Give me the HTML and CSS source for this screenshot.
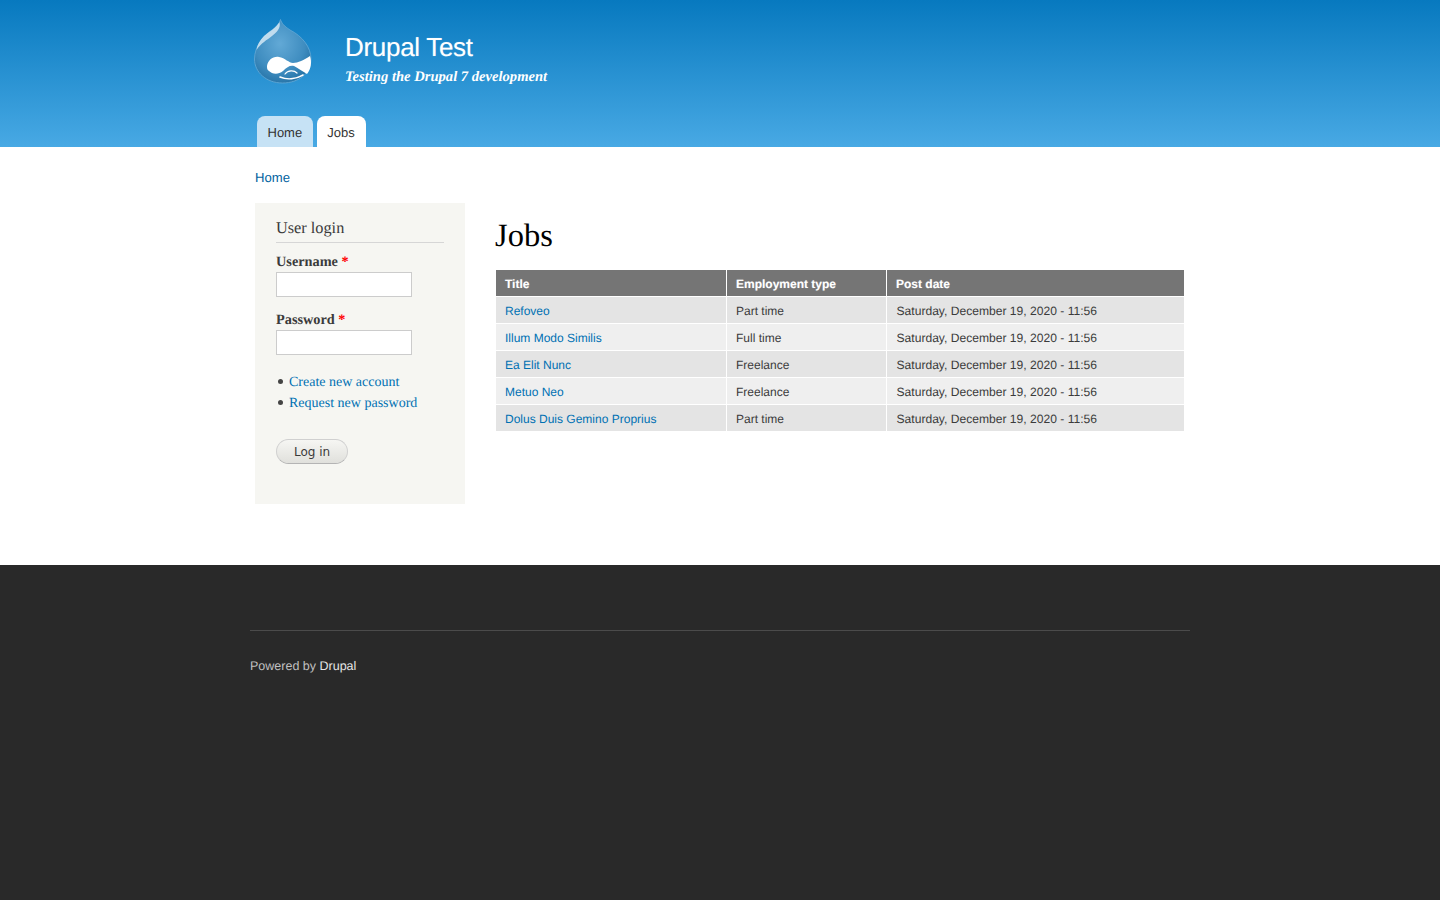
FILE: index.html
```html
<!DOCTYPE html>
<html lang="en">
<head>
<meta charset="utf-8">
<title>Jobs | Drupal Test</title>
<link rel="stylesheet" href="styles.css">
</head>
<body>
<header class="header">
  <div class="section header-inner">
    <div class="branding">
      <svg class="logo" width="60" height="66" viewBox="0 0 60 66" aria-label="Drupal logo">
        <defs>
          <radialGradient id="drop" cx="0.45" cy="0.38" r="0.72">
            <stop offset="0" stop-color="#62a9d6"/>
            <stop offset="0.6" stop-color="#3f8dc0"/>
            <stop offset="1" stop-color="#1d6a9e"/>
          </radialGradient>
        </defs>
        <path d="M26.500 0.500 C27.500 4 30 7 36 11 C48 17 57 28 57 40 C57 54 45 64 28.500 64 C12 64 0.500 53 0.500 40 C0.500 27 10 16 18 11 C22 8 25.500 5 26.500 0.500 Z" fill="url(#drop)" stroke="#5fa6d4" stroke-width="0.9"/>
        <path d="M25.500 3 C22 9 16 12 10 17 C6 21 3 26 2.500 31 C7 24 13 21 18 17 C23 13 27 9 25.500 3 Z" fill="#d4e8f4" opacity="0.85"/>
        <path d="M13 47 C14 41 19 37 25 38 C31 39 35 44 39 44 C44 44 50 41 56 37 C58 43 57 50 53 55 C48 52 44 49 40 47 C36 46 33 48 29 52 C24 56 18 55 15 52 C13 51 13 49 13 47 Z" fill="#fff"/>
        <path d="M26 58 C33 61 42 60 49 56" fill="none" stroke="#fff" stroke-width="1.600" stroke-linecap="round"/>
        <path d="M31 55 C34 51 40 51 43 54" fill="none" stroke="#fff" stroke-width="1.200" stroke-linecap="round"/>
      </svg>
      <div class="site-text">
        <div class="site-name">Drupal Test</div>
        <div class="site-slogan">Testing the Drupal 7 development</div>
      </div>
    </div>
    <nav class="tabs">
      <a class="tab tab-home" href="#">Home</a>
      <a class="tab tab-active" href="#">Jobs</a>
    </nav>
  </div>
</header>

<div class="section main">
  <div class="breadcrumb"><a href="#">Home</a></div>
  <div class="columns">
    <aside class="sidebar">
      <h2 class="block-title">User login</h2>
      <form class="login">
        <label class="field-label" for="u">Username <span class="req">*</span></label>
        <input class="text-input" id="u" type="text">
        <label class="field-label field-pass" for="p">Password <span class="req">*</span></label>
        <input class="text-input" id="p" type="password">
        <ul class="links">
          <li><a href="#">Create new account</a></li>
          <li><a href="#">Request new password</a></li>
        </ul>
        <button class="btn" type="button">Log in</button>
      </form>
    </aside>
    <main class="content">
      <h1 class="title">Jobs</h1>
      <table class="jobs">
        <colgroup><col class="c1"><col class="c2"><col class="c3"></colgroup>
        <thead><tr><th>Title</th><th>Employment type</th><th>Post date</th></tr></thead>
        <tbody>
          <tr class="odd"><td><a href="#">Refoveo</a></td><td>Part time</td><td class="date">Saturday, December 19, 2020 - 11:56</td></tr>
          <tr class="even"><td><a href="#">Illum Modo Similis</a></td><td>Full time</td><td class="date">Saturday, December 19, 2020 - 11:56</td></tr>
          <tr class="odd"><td><a href="#">Ea Elit Nunc</a></td><td>Freelance</td><td class="date">Saturday, December 19, 2020 - 11:56</td></tr>
          <tr class="even"><td><a href="#">Metuo Neo</a></td><td>Freelance</td><td class="date">Saturday, December 19, 2020 - 11:56</td></tr>
          <tr class="odd"><td><a href="#">Dolus Duis Gemino Proprius</a></td><td>Part time</td><td class="date">Saturday, December 19, 2020 - 11:56</td></tr>
        </tbody>
      </table>
    </main>
  </div>
</div>

<footer class="footer">
  <div class="section footer-inner">
    <div class="powered">Powered by <a href="#">Drupal</a></div>
  </div>
</footer>
</body>
</html>
```
FILE: styles.css
```css
html, body { margin: 0; padding: 0; height: 100%; }
body {
  font-family: "Liberation Sans", Arial, sans-serif;
  font-size: 12px;
  color: #3b3b3b;
  background: #292929;
  display: flex;
  flex-direction: column;
  min-height: 900px;
  box-sizing: border-box;
  text-rendering: geometricPrecision;
}
a { color: #0071b3; text-decoration: none; }
.section { width: 940px; margin: 0 auto; }

.header {
  height: 147px;
  background: linear-gradient(to bottom, #0779bf 0%, #48a9e4 100%);
}
.header-inner { height: 147px; display: flex; flex-direction: column; justify-content: space-between; }
.branding { display: flex; padding: 19px 0 0 4px; }
.logo { display: block; flex: none; }
.site-text { margin-left: 31px; padding-top: 11px; color: #fff; }
.site-name {
  font-size: 26px;
  line-height: 34px;
  letter-spacing: -0.3px;
  text-shadow: 0 0 1px rgba(255,255,255,0.4);
}
.site-slogan {
  margin-top: 4px;
  font-family: "Liberation Serif", Georgia, serif;
  font-style: italic;
  font-weight: bold;
  font-size: 14.6px;
  line-height: 18px;
}
.tabs { display: flex; gap: 4px; padding-left: 7px; }
.tab {
  height: 31px;
  line-height: 33px;
  padding: 0 10.5px;
  border-radius: 8px 8px 0 0;
  font-size: 13px;
  color: #333;
}
.tab-home { background: #c6e2f5; }
.tab-active { background: #fff; padding-right: 11.5px; }

.main { background: #fff; box-shadow: 0 0 0 100vw #fff; clip-path: inset(0 -100vw); height: 418px; }
.breadcrumb { padding: 23px 0 0 5px; height: 33px; line-height: 16px; font-size: 13.1px; }
.breadcrumb a { color: #0062a0; }
.columns { display: flex; padding-left: 5px; }

.sidebar {
  box-sizing: border-box;
  width: 210px;
  height: 301px;
  padding: 15px 21px 0;
  background: #f6f6f2;
  flex: none;
  font-family: "Liberation Serif", Georgia, serif;
}
.block-title {
  margin: 0;
  height: 24px;
  line-height: 20px;
  font-size: 16.3px;
  font-weight: normal;
  color: #3b3b3b;
  border-bottom: 1px solid #d6d6d6;
}
.login { display: block; }
.field-label {
  display: block;
  margin-top: 11px;
  height: 18px;
  line-height: 16px;
  font-size: 14.3px;
  font-weight: bold;
  color: #3b3b3b;
}
.field-pass { margin-top: 15px; }
.req { color: #f00; }
.text-input {
  display: block;
  box-sizing: border-box;
  width: 136px;
  height: 25px;
  margin: 0;
  padding: 0;
  border: 1px solid #ccc;
  background: #fff;
}
.links { list-style: none; margin: 17px 0 0; padding: 0; font-size: 14px; }
.links li { position: relative; height: 21px; line-height: 21px; padding-left: 13px; }
.links li::before {
  content: "";
  position: absolute;
  left: 2px;
  top: 7px;
  width: 5px;
  height: 5px;
  border-radius: 50%;
  background: #444;
}
.btn {
  display: block;
  box-sizing: border-box;
  width: 72px;
  height: 25px;
  margin: 25px 0 0;
  padding: 0;
  border: 1px solid #d0d0d0;
  border-bottom-color: #b4b4b4;
  border-radius: 20px;
  background: linear-gradient(to bottom, #f6f6f3 0%, #e0e0dc 100%);
  font-family: "DejaVu Sans", sans-serif;
  font-size: 12px;
  color: #3a3a3a;
}

.content { margin-left: 30px; flex: 1; min-width: 0; }
.title {
  margin: 14px 0 0;
  height: 38px;
  line-height: 38px;
  font-family: "Liberation Serif", Georgia, serif;
  font-size: 32.5px;
  font-weight: normal;
  color: #000;
}
.jobs {
  margin-top: 14px;
  width: 689px;
  table-layout: fixed;
  border-collapse: collapse;
  font-size: 12px;
}
.c1 { width: 231px; }
.c2 { width: 160px; }
.c3 { width: 298px; }
.jobs th, .jobs td {
  height: 27px;
  padding: 2px 0 0 9px;
  border: 1px solid #fff;
  text-align: left;
  box-sizing: border-box;
  line-height: 16px;
}
.jobs .date { font-size: 12.1px; padding-left: 9.5px; }
.jobs th { background: #757575; color: #fff; font-weight: bold; text-shadow: 0 0 1px rgba(255,255,255,0.35); }
.odd td { background: #e4e4e4; }
.even td { background: #efefef; }

.footer { flex: 1; background: #292929; }
.footer-inner { padding-top: 65px; }
.powered {
  border-top: 1px solid #4b4b4b;
  padding-top: 27px;
  font-size: 12.5px;
  line-height: 16px;
  color: #c0c0c0;
}
.powered a { color: #e4e4e4; }
```
